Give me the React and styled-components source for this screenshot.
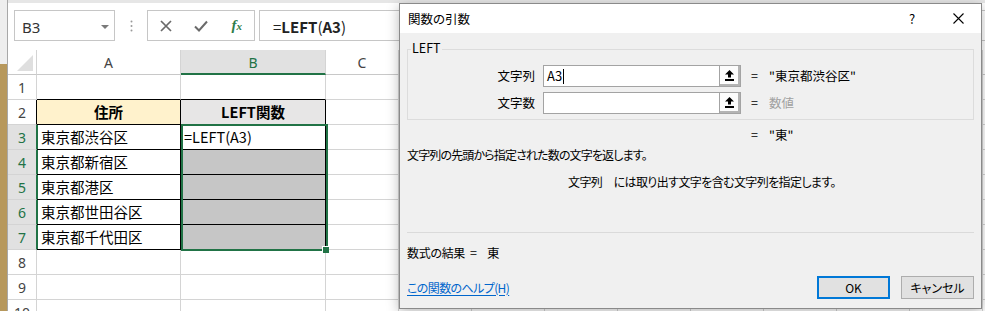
import React from 'react';
import styled, { createGlobalStyle } from 'styled-components';

const Global = createGlobalStyle`
  html, body { margin: 0; padding: 0; background: #fff; }
  body { width: 985px; height: 311px; overflow: hidden; }
  *, *::before, *::after { box-sizing: border-box; }
`;

const GREEN = '#217346';
const GRID = '#d4d4d4';

const Screen = styled.div`
  position: relative;
  width: 985px;
  height: 311px;
  overflow: hidden;
  display: flex;
  background: #fff;
  font-family: "Noto Sans CJK JP", "Noto Sans", sans-serif;
`;

const SideStrip = styled.div`
  width: 7px;
  flex: none;
  background: linear-gradient(#eeeeee 0 64px, #b7985c 64px);
`;

const Workbook = styled.div`
  flex: 1;
  min-width: 0;
  display: flex;
  flex-direction: column;
  border-left: 1px solid #a8a8a8;
`;

const TopEdge = styled.div`
  height: 3px;
  flex: none;
  background: #e6e6e6;
`;

const FormulaBar = styled.div`
  height: 47px;
  flex: none;
  display: flex;
  align-items: flex-start;
  padding: 7px 0 0 6px;
`;

const NameBox = styled.div`
  width: 101px;
  height: 31px;
  flex: none;
  border: 1px solid #c6c6c6;
  display: flex;
  align-items: center;
  justify-content: space-between;
  padding: 2px 5px 0 7px;
  font: 15px "Noto Sans", sans-serif;
  color: #333;
`;

const Dots = styled.div`
  width: 32px;
  height: 31px;
  flex: none;
  display: flex;
  align-items: center;
  justify-content: center;
`;

const ButtonGroup = styled.div`
  width: 108px;
  height: 31px;
  flex: none;
  border: 1px solid #c6c6c6;
  display: grid;
  grid-template-columns: repeat(3, 1fr);
  align-items: center;
  justify-items: center;
`;

const Fx = styled.span`
  font-family: "Liberation Serif", serif;
  font-style: italic;
  font-weight: 700;
  font-size: 15px;
  color: #2f7d4a;
  line-height: 1;
  padding-left: 1px;
  & > small { font-size: 11px; }
`;

const FormulaInput = styled.div`
  flex: 1;
  height: 31px;
  margin-left: 4px;
  margin-right: -2px;
  border: 1px solid #c6c6c6;
  display: flex;
  align-items: center;
  padding: 1px 0 0 13px;
  font-size: 15px;
  color: #222;
  line-height: 1;
`;

const B = styled.b`
  font-weight: 700;
`;

const Grid = styled.div`
  flex: 1;
  overflow: hidden;
  display: grid;
  grid-template-columns: 29px 144px 145px repeat(10, 73px);
  grid-auto-rows: 25px;
`;

const Corner = styled.div`
  grid-row: 1;
  grid-column: 1;
  border-right: 1px solid ${GRID};
  border-bottom: 1px solid #c8c8c8;
  display: flex;
  align-items: flex-end;
  justify-content: flex-end;
  padding: 0 3px 3px 0;
`;

const CornerTri = styled.div`
  width: 16px;
  height: 16px;
  background: #dfdfdf;
  clip-path: polygon(100% 0, 100% 100%, 0 100%);
`;

const ColHeader = styled.div`
  grid-row: 1;
  grid-column: ${p => p.$col};
  border-right: 1px solid ${GRID};
  border-bottom: ${p => (p.$sel ? `2px solid ${GREEN}` : '1px solid #c8c8c8')};
  background: ${p => (p.$sel ? '#e1e1e1' : '#fff')};
  color: ${p => (p.$sel ? GREEN : '#444')};
  font: 14px "Noto Sans", sans-serif;
  display: flex;
  align-items: center;
  justify-content: center;
  padding-top: ${p => (p.$sel ? 1 : 0)}px;
`;

const RowHeader = styled.div`
  grid-row: ${p => p.$row};
  grid-column: 1;
  border-right: 1px solid ${p => p.$edge};
  border-bottom: 1px solid ${GRID};
  background: ${p => (p.$sel ? '#e1e1e1' : '#fff')};
  color: ${p => (p.$sel ? GREEN : '#444')};
  font: 14px "Noto Sans", sans-serif;
  display: flex;
  align-items: center;
  justify-content: center;
`;

const Cell = styled.div`
  grid-row: ${p => p.$row};
  grid-column: ${p => p.$col};
  border-right: 1px solid ${p => p.$r};
  border-bottom: 1px solid ${p => p.$b};
  background: ${p => p.$bg || '#fff'};
  box-shadow: ${p => (p.$mark ? `inset 1px 0 0 ${GREEN}` : 'none')};
  display: flex;
  align-items: center;
  justify-content: ${p => (p.$center ? 'center' : 'flex-start')};
  padding: 1px 0 0 ${p => (p.$center ? 0 : p.$pad)}px;
  font-size: 14.5px;
  font-weight: ${p => (p.$bold ? 700 : 400)};
  color: #000;
  white-space: nowrap;
  overflow: hidden;
  line-height: 1;
`;

const Selection = styled.div`
  grid-column: 3 / 4;
  grid-row: 4 / 9;
  margin: -1px -2px -1px 0;
  border: 2px solid ${GREEN};
  position: relative;
  z-index: 2;
  pointer-events: none;
`;

const FillHandle = styled.div`
  position: absolute;
  right: -3px;
  bottom: -4px;
  width: 6px;
  height: 6px;
  background: ${GREEN};
  box-shadow: -1px -1px 0 0 #fff;
`;

/* ---------- dialog ---------- */

const Dialog = styled.div`
  position: absolute;
  left: 399px;
  top: 3px;
  width: 583px;
  height: 306px;
  border: 1px solid #8a8a8a;
  box-shadow: 0 3px 12px rgba(0, 0, 0, 0.28);
  display: flex;
  flex-direction: column;
  background: #f0f0f0;
  font-family: "Noto Sans CJK JP", sans-serif;
  font-feature-settings: "palt" 1;
  font-size: 12.5px;
  color: #000;
  line-height: 16px;
  z-index: 5;
`;

const TitleBar = styled.div`
  height: 29px;
  flex: none;
  background: #fff;
  display: flex;
  align-items: stretch;
`;

const Title = styled.div`
  flex: 1;
  padding: 1px 0 0 8px;
  display: flex;
  align-items: center;
`;

const CaptionButton = styled.div`
  width: 46px;
  flex: none;
  display: flex;
  align-items: center;
  justify-content: center;
  font-size: 13px;
`;

const DialogBody = styled.div`
  flex: 1;
  display: flex;
  flex-direction: column;
  padding: 0 7px;
`;

const Group = styled.div`
  position: relative;
  margin-top: 16px;
  height: 71px;
  flex: none;
  border: 1px solid #dcdcdc;
  padding-top: 15px;
  display: flex;
  flex-direction: column;
  gap: 5px;
`;

const Legend = styled.span`
  position: absolute;
  top: -10px;
  left: 3px;
  padding: 0 1px;
  background: #f0f0f0;
`;

const ArgRow = styled.div`
  height: 22px;
  display: flex;
  align-items: center;
`;

const ArgLabel = styled.div`
  width: 127px;
  flex: none;
  text-align: right;
`;

const ArgInput = styled.div`
  width: 198px;
  height: 22px;
  flex: none;
  margin-left: 8px;
  display: flex;
  border: 1px solid #a3a3a3;
  background: #fff;
`;

const InputText = styled.div`
  flex: 1;
  display: flex;
  align-items: center;
  padding-left: 3px;
  font-size: 13px;
`;

const Caret = styled.span`
  display: inline-block;
  width: 1px;
  height: 15px;
  background: #000;
  margin-left: 1px;
`;

const RefButton = styled.div`
  width: 21px;
  flex: none;
  border-left: 1px solid #a3a3a3;
  background: #fcfcfc;
  box-shadow: inset -2px -2px 0 #b4b4b4;
  display: flex;
  align-items: center;
  justify-content: center;
  padding: 0 2px 2px 0;
`;

const Eq = styled.span`
  margin-left: ${p => p.$ml}px;
`;

const Value = styled.span`
  margin-left: 11px;
  color: ${p => (p.$muted ? '#a0a0a0' : '#000')};
`;

const ResultRow = styled.div`
  margin-top: 7px;
  padding-left: 344px;
  display: flex;
`;

const Desc = styled.div`
  margin-top: ${p => p.$mt}px;
  padding-left: ${p => p.$pl || 0}px;
  white-space: nowrap;
  font-size: 12px;
  letter-spacing: ${p => p.$ls}px;
`;

const Separator = styled.div`
  margin-top: 42px;
  height: 1px;
  flex: none;
  background: #dadada;
`;

const FormulaResult = styled.div`
  margin-top: 12px;
  display: flex;
  white-space: nowrap;
`;

const ResultLabel = styled.span`
  font-size: 12px;
  letter-spacing: -0.3px;
`;

const Footer = styled.div`
  margin-top: 15px;
  height: 23px;
  flex: none;
  display: flex;
  align-items: center;
  gap: 11px;
`;

const HelpLink = styled.a`
  flex: 1;
  color: #0066cc;
  text-decoration: underline;
  text-underline-offset: 2px;
  font-size: 12px;
  letter-spacing: -0.6px;
`;

const DlgButton = styled.div`
  width: 73px;
  height: 23px;
  flex: none;
  background: #e1e1e1;
  border: ${p => (p.$default ? '2px solid #0078d7' : '1px solid #adadad')};
  display: flex;
  align-items: center;
  justify-content: center;
  font-size: 12px;
`;

/* ---------- data ---------- */

const cols = ['A', 'B', 'C', 'D', 'E', 'F', 'G', 'H', 'I', 'J', 'K', 'L'];

const data = {
  2: {
    A: { text: '住所', bold: true, center: true, bg: '#fff2cc' },
    B: { text: 'LEFT関数', bold: true, center: true, bg: '#e7e6e6' },
  },
  3: { A: { text: '東京都渋谷区' }, B: { text: '=LEFT(A3)', pad: 3 } },
  4: { A: { text: '東京都新宿区' }, B: { bg: '#c6c6c6' } },
  5: { A: { text: '東京都港区' }, B: { bg: '#c6c6c6' } },
  6: { A: { text: '東京都世田谷区' }, B: { bg: '#c6c6c6' } },
  7: { A: { text: '東京都千代田区' }, B: { bg: '#c6c6c6' } },
};

const rows = [1, 2, 3, 4, 5, 6, 7, 8, 9, 10];

function renderRow(r) {
  const sel = r >= 3 && r <= 7;
  const edge = sel ? GREEN : r === 2 ? '#000' : GRID;
  const gridRow = r + 1;
  const out = [
    <RowHeader key={`h${r}`} $row={gridRow} $sel={sel} $edge={edge}>
      {r}
    </RowHeader>,
  ];
  cols.forEach((c, i) => {
    const inTable = r >= 2 && r <= 7 && (c === 'A' || c === 'B');
    const above = r === 1 && (c === 'A' || c === 'B');
    const d = (data[r] && data[r][c]) || {};
    out.push(
      <Cell
        key={`${c}${r}`}
        $row={gridRow}
        $col={i + 2}
        $r={inTable ? '#000' : GRID}
        $b={inTable || above ? '#000' : GRID}
        $bg={d.bg}
        $bold={d.bold}
        $center={d.center}
        $pad={d.pad ?? 4}
        $mark={sel && c === 'A'}
      >
        {d.text}
      </Cell>
    );
  });
  return out;
}

const CloseIcon = () => (
  <svg width="11" height="11" viewBox="0 0 11 11">
    <path d="M0.5 0.5 L10.5 10.5 M10.5 0.5 L0.5 10.5" stroke="#000" strokeWidth="1.1" fill="none" />
  </svg>
);

const RefIcon = () => (
  <svg width="9" height="11" viewBox="0 0 9 11">
    <path d="M4.5 0 L9 4.5 L6 4.5 L6 7.5 L3 7.5 L3 4.5 L0 4.5 Z" fill="#000" />
    <rect x="0" y="9" width="9" height="2" fill="#000" />
  </svg>
);

export default function App() {
  return (
    <>
      <Global />
      <Screen>
        <SideStrip />
        <Workbook>
          <TopEdge />
          <FormulaBar>
            <NameBox>
              <span>B3</span>
              <svg width="8" height="4" viewBox="0 0 8 4">
                <path d="M0 0 L8 0 L4 4 Z" fill="#7a7a7a" />
              </svg>
            </NameBox>
            <Dots>
              <svg width="3" height="12" viewBox="0 0 3 12">
                <circle cx="1.5" cy="1.5" r="1" fill="#9a9a9a" />
                <circle cx="1.5" cy="6" r="1" fill="#9a9a9a" />
                <circle cx="1.5" cy="10.5" r="1" fill="#9a9a9a" />
              </svg>
            </Dots>
            <ButtonGroup>
              <svg width="12" height="12" viewBox="0 0 12 12">
                <path d="M1 1 L11 11 M11 1 L1 11" stroke="#6a6a6a" strokeWidth="1.7" fill="none" />
              </svg>
              <svg width="14" height="12" viewBox="0 0 14 12">
                <path d="M1 6.5 L5 10.5 L13 1.5" stroke="#6a6a6a" strokeWidth="2" fill="none" />
              </svg>
              <Fx>
                f<small>x</small>
              </Fx>
            </ButtonGroup>
            <FormulaInput>
              =<B>LEFT</B>(<B>A3</B>)
            </FormulaInput>
          </FormulaBar>
          <Grid>
            <Corner>
              <CornerTri />
            </Corner>
            {cols.map((c, i) => (
              <ColHeader key={c} $col={i + 2} $sel={c === 'B'}>
                {c}
              </ColHeader>
            ))}
            {rows.map(renderRow)}
            <Selection>
              <FillHandle />
            </Selection>
          </Grid>
        </Workbook>

        <Dialog>
          <TitleBar>
            <Title>関数の引数</Title>
            <CaptionButton>?</CaptionButton>
            <CaptionButton>
              <CloseIcon />
            </CaptionButton>
          </TitleBar>
          <DialogBody>
            <Group>
              <Legend>LEFT</Legend>
              <ArgRow>
                <ArgLabel>文字列</ArgLabel>
                <ArgInput>
                  <InputText>
                    A3
                    <Caret />
                  </InputText>
                  <RefButton>
                    <RefIcon />
                  </RefButton>
                </ArgInput>
                <Eq $ml={10}>=</Eq>
                <Value>"東京都渋谷区"</Value>
              </ArgRow>
              <ArgRow>
                <ArgLabel>文字数</ArgLabel>
                <ArgInput>
                  <InputText />
                  <RefButton>
                    <RefIcon />
                  </RefButton>
                </ArgInput>
                <Eq $ml={10}>=</Eq>
                <Value $muted>数値</Value>
              </ArgRow>
            </Group>
            <ResultRow>
              <Eq $ml={0}>=</Eq>
              <Value>"東"</Value>
            </ResultRow>
            <Desc $mt={4} $ls={-0.85}>
              文字列の先頭から指定された数の文字を返します。
            </Desc>
            <Desc $mt={11} $pl={161} $ls={-0.6}>
              文字列　には取り出す文字を含む文字列を指定します。
            </Desc>
            <Separator />
            <FormulaResult>
              <ResultLabel>数式の結果</ResultLabel>
              <Eq $ml={5}>=</Eq>
              <Eq $ml={10}>東</Eq>
            </FormulaResult>
            <Footer>
              <HelpLink>この関数のヘルプ(H)</HelpLink>
              <DlgButton $default>OK</DlgButton>
              <DlgButton>キャンセル</DlgButton>
            </Footer>
          </DialogBody>
        </Dialog>
      </Screen>
    </>
  );
}
